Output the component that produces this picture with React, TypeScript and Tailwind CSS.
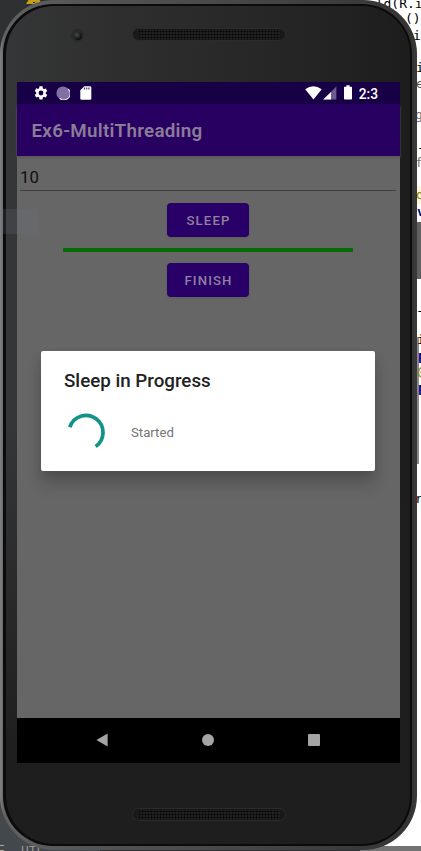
import React from "react";

type CodeBit = { text: string; className: string };

const codeBits: CodeBit[] = [
  { text: "uild(R.i", className: "left-[360px] top-[-5px] text-black" },
  { text: "()", className: "left-[405px] top-[10px] text-black" },
  { text: "i", className: "left-[413px] top-[27px] text-black" },
  { text: "i", className: "left-[416px] top-[59px] text-black" },
  { text: "e", className: "left-[416px] top-[75px] text-[#555]" },
  { text: "ge", className: "left-[415px] top-[106px] text-[#777]" },
  { text: "-", className: "left-[417px] top-[139px] text-black" },
  { text: "f", className: "left-[415px] top-[154px] text-[#777]" },
  { text: "d", className: "left-[416px] top-[186px] text-[#808000] bg-[#fbf5da]" },
  { text: "v", className: "left-[417px] top-[203px] text-[#000080] font-bold" },
  { text: "-", className: "left-[416px] top-[302px] text-black" },
  { text: "i", className: "left-[417px] top-[331px] text-black" },
  { text: "p", className: "left-[418px] top-[347px] text-[#000080] font-bold" },
  { text: "@", className: "left-[418px] top-[363px] text-[#808000]" },
  { text: "p", className: "left-[418px] top-[379px] text-[#000080] font-bold" },
  { text: "r", className: "left-[415px] top-[490px] text-black" },
];

function EditorBackdrop() {
  return (
    <div className="absolute inset-0 flex overflow-hidden" aria-hidden="true">
      <div className="w-[360px] bg-[#2f3032]" />
      <div className="flex flex-1 flex-col bg-white">
        <div className="h-[222px]" />
        <div className="h-[57px] bg-[#606060]" />
        <div className="h-[58px]" />
        <div className="ml-[57px] h-[127px] w-[2px] bg-[#888]" />
        <div className="flex-1" />
        <div className="h-[5px] bg-[#737373]" />
      </div>
      <div className="absolute bottom-0 left-0 h-[60px] w-[100px] bg-[#43484c]" />
      <span className="absolute bottom-[-9px] left-[-3px] font-['Liberation_Mono',monospace] text-[13px] text-[#aaa]">F</span>
      <span className="absolute bottom-[-10px] left-[21px] font-['Liberation_Mono',monospace] text-[13px] text-[#999]">UTF-</span>
      <svg className="absolute left-[25px] top-[-9px]" width="18" height="13" viewBox="0 0 18 13">
        <path d="M9 0 17 13H1Z" fill="#c3a017" />
        <path d="M9 6v3M9 11v1" stroke="#222" strokeWidth="2" />
      </svg>
      {codeBits.map((bit, i) => (
        <span
          key={i}
          className={`absolute whitespace-pre font-['DejaVu_Sans_Mono',monospace] text-[13px] leading-[18px] ${bit.className}`}
        >
          {bit.text}
        </span>
      ))}
    </div>
  );
}

function Speaker() {
  return (
    <div className="flex h-[13px] w-[154px] items-center justify-center rounded-full border border-[#2b2b2b] bg-[#191919]">
      <div className="h-[9px] w-[142px] bg-[radial-gradient(circle,#050505_0.8px,#202020_1.2px)] bg-[length:3px_3px]" />
    </div>
  );
}

function StatusBar() {
  return (
    <div className="flex h-[22px] shrink-0 items-center bg-[#170045] pl-[16px] pr-[22px] text-white">
      <svg width="16" height="16" viewBox="0 0 24 24" fill="currentColor">
        <path d="M19.14 12.94c.04-.3.06-.61.06-.94s-.02-.64-.07-.94l2.03-1.58c.18-.14.23-.41.12-.61l-1.92-3.32c-.12-.22-.37-.29-.59-.22l-2.39.96c-.5-.38-1.03-.7-1.62-.94l-.36-2.54A.48.48 0 0 0 13.92 2h-3.84c-.24 0-.43.17-.47.41l-.36 2.54c-.59.24-1.13.57-1.62.94l-2.39-.96c-.22-.08-.47 0-.59.22L2.74 8.87c-.12.21-.08.47.12.61l2.03 1.58c-.05.3-.09.63-.09.94s.02.64.07.94l-2.03 1.58c-.18.14-.23.41-.12.61l1.92 3.32c.12.22.37.29.59.22l2.39-.96c.5.38 1.03.7 1.62.94l.36 2.54c.05.24.24.41.48.41h3.84c.24 0 .44-.17.47-.41l.36-2.54c.59-.24 1.13-.56 1.62-.94l2.39.96c.22.08.47 0 .59-.22l1.92-3.32c.12-.22.07-.47-.12-.61zM12 15.6A3.6 3.6 0 1 1 12 8.4a3.6 3.6 0 0 1 0 7.2z" />
      </svg>
      <svg className="ml-[7px]" width="14" height="14" viewBox="0 0 14 14">
        <circle cx="7" cy="7" r="6.6" fill="#8170a3" />
        <path d="M12.1 3A6.2 6.2 0 0 1 3.6 12.2" fill="none" stroke="#e4deed" strokeWidth="1.2" />
      </svg>
      <svg className="ml-[10px]" width="12" height="14" viewBox="0 0 12 14">
        <path d="M4.3.2H10Q11.3.2 11.3 1.5V12.4Q11.3 13.7 10 13.7H1.5Q.3 13.7.3 12.4V4.3Z" fill="white" />
        <path d="M4.5 1.5v2M6.7 1.5v2M8.9 1.5v2" stroke="#48366b" strokeWidth="1.2" />
      </svg>
      <div className="flex-1" />
      <svg width="17" height="14" viewBox="0 0 17 14">
        <path d="M.2 3.3Q8.3-2.7 16.7 3.3L8.5 13.4Z" fill="white" />
      </svg>
      <svg className="ml-[1px]" width="14" height="14" viewBox="0 0 14 14">
        <path d="M13.4.5V13.6H.3Z" fill="#6c5a91" />
        <path d="M8 5.9V13.6H.3Z" fill="white" />
      </svg>
      <svg className="ml-[7px] mt-[-1px]" width="8" height="15" viewBox="0 0 8 15">
        <path d="M2.4.3h3.2v1.4h1.7q.7 0 .7.7v11.3q0 .8-.8.8H.8q-.8 0-.8-.8V2.4q0-.7.7-.7h1.7Z" fill="white" />
      </svg>
      <span className="ml-[7px] pt-[2px] text-[13.8px] font-medium leading-[20px]">2:3</span>
    </div>
  );
}

function ActionButton({ label }: { label: string }) {
  return (
    <button className="h-[34px] w-[82px] rounded-[4px] bg-[#280067] pl-[2px] pt-px text-[13.2px] font-medium tracking-[1.1px] text-[#8e80a0] shadow-[0_1px_2px_#5558]">
      {label}
    </button>
  );
}

function ProgressDialog() {
  return (
    <div className="absolute left-[24px] top-[269px] h-[120px] w-[334px] rounded-[2px] bg-white pl-[23px] pt-[18px] shadow-[0_13px_16px_rgba(0,0,0,0.18),0_4px_10px_rgba(0,0,0,0.1)]">
      <h2 className="text-[18.75px] font-medium leading-[24px] text-[#212121]">Sleep in Progress</h2>
      <div className="mt-[17px] flex items-center">
        <svg width="44" height="44" viewBox="0 0 44 44">
          <path d="M5.8 17.3A17 17 0 1 1 31.7 36.4" fill="none" stroke="#109487" strokeWidth="3.7" />
        </svg>
        <span className="ml-[23px] pt-px text-[13.2px] text-[#757575]">Started</span>
      </div>
    </div>
  );
}

function NavigationBar() {
  return (
    <div className="flex h-[45px] shrink-0 items-center bg-black pb-px pl-[79px]">
      <svg width="12" height="14" viewBox="0 0 12 14"><path d="M.4 7 11.6.5v13Z" fill="#a5a5a5" /></svg>
      <div className="ml-[94px] size-[12px] rounded-full bg-[#a5a5a5]" />
      <div className="ml-[94px] size-[12px] rounded-[1px] bg-[#a5a5a5]" />
    </div>
  );
}

function Screen() {
  return (
    <div className="relative ml-[11px] flex h-[681px] w-[383px] shrink-0 flex-col bg-[#666]">
      <StatusBar />
      <header className="flex h-[52px] shrink-0 items-center bg-[#280061] pl-[14.5px] pt-[3px] text-[18.8px] font-semibold tracking-[0.27px] text-[#897d98] shadow-[0_2px_2px_#5a5a5a]">
        Ex6-MultiThreading
      </header>
      <main className="flex flex-1 flex-col items-center pr-[2px]">
        <div className="flex h-[35px] w-[376px] items-center border-b border-[#3c3c3c] pl-[0.5px] pt-[9px] text-[16.7px] text-[#101010]">10</div>
        <div className="mt-[12px] flex"><ActionButton label="SLEEP" /></div>
        <div className="my-[11px] h-[4px] w-[290px] bg-[#066a06]" />
        <ActionButton label="FINISH" />
      </main>
      <NavigationBar />
      <ProgressDialog />
    </div>
  );
}

export default function App() {
  return (
    <div className="relative h-[851px] w-[421px] overflow-hidden font-['Roboto',sans-serif]">
      <EditorBackdrop />
      <div className="relative h-[850px] w-[417px] rounded-[54px] bg-[linear-gradient(90deg,#828282_0px,#626262_4px,#555_80px,#454545_260px,#343434_412px,#3a3a3a)] pb-[4px] pl-[3px] pr-[5px] pt-[4px]">
        <div className="h-full rounded-[50px] bg-[#0b0b0b] p-[2px] pl-[3px]">
          <div className="flex h-full flex-col items-start overflow-hidden rounded-[48px] bg-[linear-gradient(180deg,transparent_0%,transparent_50%,#1e1e1f_90%),linear-gradient(90deg,#353637_0%,#2f2f2f_25%,#242424_75%,#1d1d1d_100%)]">
            <div className="flex h-[76px] w-full shrink-0 items-start pl-[65px] pt-[22px]">
              <div className="mt-[1px] flex size-[13px] items-center justify-center rounded-full bg-[#292a2b]">
                <div className="size-[8px] rounded-full bg-[radial-gradient(circle_at_35%_35%,#454b50,#111_65%)]" />
              </div>
              <div className="ml-[48px]"><Speaker /></div>
            </div>
            <Screen />
            <div className="w-full flex-1 pl-[126px] pt-[45px]">
              <Speaker />
            </div>
          </div>
        </div>
      </div>
      <div className="absolute left-0 top-[209px] h-[25px] w-[39px] bg-[#6c7587]/20" />
    </div>
  );
}
